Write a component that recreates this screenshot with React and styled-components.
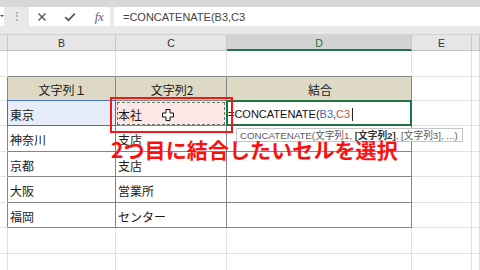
import React from "react";
import styled, { createGlobalStyle, css } from "styled-components";

const GlobalStyle = createGlobalStyle`
  html, body { margin: 0; padding: 0; background: #fff; }
  body {
    width: 480px;
    height: 270px;
    overflow: hidden;
    font-family: "Noto Sans CJK JP", "Noto Sans", sans-serif;
  }
`;

const COLS = "8px 108px 111px 185px 60px 1fr";
const GRID = "#e1e1e1";
const DARK = "#858585";
const GREEN = "#217346";

const Screen = styled.div`
  position: relative;
  width: 480px;
  height: 270px;
  overflow: hidden;
  background: #fff;
  display: flex;
  flex-direction: column;
`;

const TopStrip = styled.div`
  height: 7px;
  flex: none;
  background: #d8d8d8;
`;

const FormulaBar = styled.div`
  height: 27px;
  flex: none;
  box-sizing: border-box;
  padding-bottom: 8px;
  background: #e9e9e9;
  display: flex;
  align-items: stretch;
`;

const NameBox = styled.div`
  width: 4px;
  background: #fff;
  position: relative;
  &::after {
    content: "";
    position: absolute;
    left: 0;
    top: 8px;
    border-left: 2px solid transparent;
    border-right: 2px solid transparent;
    border-top: 2px solid #555;
  }
`;

const GripArea = styled.div`
  width: 25px;
  display: flex;
  align-items: center;
  justify-content: center;
`;

const Grip = styled.span`
  width: 0;
  height: 9px;
  border-left: 2px dotted #b9b9b9;
`;

const FxBox = styled.div`
  width: 81px;
  background: #fff;
  display: flex;
  align-items: center;
  padding-left: 8px;
  box-sizing: border-box;
`;

const IconSlot = styled.span`
  width: ${(p) => p.$w}px;
  display: flex;
  align-items: center;
  justify-content: center;
  color: #555;
`;

const Fx = styled.span`
  font-family: "Liberation Serif", "DejaVu Serif", serif;
  font-style: italic;
  font-size: 13px;
  color: #666;
  letter-spacing: -0.5px;
`;

const FormulaInput = styled.div`
  flex: 1;
  margin-left: 4px;
  background: #fff;
  display: flex;
  align-items: center;
  padding-left: 9px;
  font-family: "Liberation Sans", Arial, sans-serif;
  font-size: 11px;
  color: #444;
`;

const Row = styled.div`
  display: grid;
  grid-template-columns: ${COLS};
  height: ${(p) => p.$h}px;
  flex: none;
`;

const HeadCell = styled.div`
  box-sizing: border-box;
  border-right: 1px solid #c9c9c9;
  border-bottom: ${(p) => (p.$selected ? `2px solid ${GREEN}` : "1px solid #c3c3c3")};
  border-top: 1px solid #d2d2d2;
  background: ${(p) => (p.$selected ? "#d3d3d3" : "#e6e6e6")};
  color: ${(p) => (p.$selected ? GREEN : "#333")};
  font-family: "Liberation Sans", Arial, sans-serif;
  font-size: 10.5px;
  display: flex;
  align-items: center;
  justify-content: center;
  padding-top: 1px;
`;

const markStyles = {
  ref: css`
    background: #e6ecf8;
    &::after {
      content: "";
      position: absolute;
      inset: -1px;
      border: 1px solid #4a6fc0;
      pointer-events: none;
    }
  `,
  copy: css`
    background: #fce6e6;
    &::after {
      content: "";
      position: absolute;
      inset: 1px 1px 0 1px;
      border: 1px dashed #62806c;
      pointer-events: none;
    }
  `,
  active: css`
    z-index: 2;
    &::after {
      content: "";
      position: absolute;
      inset: -1px;
      border: 2px solid ${GREEN};
      pointer-events: none;
    }
  `,
};

const Cell = styled.div`
  position: relative;
  box-sizing: border-box;
  border-right: 1px solid ${(p) => (p.$darkRight ? DARK : GRID)};
  border-bottom: 1px solid ${(p) => (p.$darkBottom ? DARK : GRID)};
  background: ${(p) => p.$bg || "#fff"};
  display: flex;
  align-items: center;
  justify-content: ${(p) => (p.$center ? "center" : "flex-start")};
  padding: 2px 0 0 2px;
  font-size: 12px;
  color: #1a1a1a;
  white-space: nowrap;
  ${(p) => p.$mark && markStyles[p.$mark]}
`;

const FormulaText = styled.span`
  font-family: "Liberation Sans", Arial, sans-serif;
  font-size: 11px;
  color: #111;
  display: flex;
  align-items: center;
  margin-left: -1px;
`;

const Ref = styled.span`
  color: ${(p) => p.$color};
`;

const Caret = styled.span`
  display: inline-block;
  width: 1px;
  height: 13px;
  margin-left: 2px;
  background: #222;
`;

const RedFrame = styled.span`
  position: absolute;
  left: -6px;
  right: -7px;
  top: -4px;
  bottom: -8px;
  border: 2px solid #fa1414;
  z-index: 5;
  pointer-events: none;
`;

const CursorIcon = styled.svg`
  position: absolute;
  left: 46px;
  top: 8px;
  z-index: 4;
`;

const Tooltip = styled.div`
  position: absolute;
  left: 236px;
  top: 128px;
  height: 14px;
  padding: 0 4px 0 3px;
  box-sizing: border-box;
  background: #fff;
  border: 1px solid #c4c4c4;
  font-family: "Liberation Sans", "Noto Sans CJK JP", sans-serif;
  font-size: 9.7px;
  color: #5b5b5b;
  display: flex;
  align-items: center;
  white-space: nowrap;
  z-index: 6;
`;

const Strong = styled.b`
  color: #333;
  font-weight: 700;
`;

const Caption = styled.div`
  position: absolute;
  left: 111px;
  top: 139px;
  font-family: "Noto Sans CJK JP", sans-serif;
  font-weight: 700;
  font-size: 21px;
  line-height: 21px;
  color: #fb1010;
  white-space: nowrap;
  z-index: 7;
  letter-spacing: 0.1px;
`;

const XIcon = () => (
  <svg width="10" height="10" viewBox="0 0 10 10">
    <path d="M1.5 1.5 L8.5 8.5 M8.5 1.5 L1.5 8.5" stroke="#555" strokeWidth="1.4" fill="none" />
  </svg>
);

const CheckIcon = () => (
  <svg width="12" height="10" viewBox="0 0 12 10">
    <path d="M1.2 5.2 L4.4 8.3 L10.8 1.6" stroke="#555" strokeWidth="1.8" fill="none" />
  </svg>
);

const rows = [
  { h: 26 },
  { h: 24, head: true, b: "文字列１", c: "文字列2", d: "結合" },
  { h: 25, b: "東京", c: "本社", formula: true },
  { h: 26, b: "神奈川", c: "支店" },
  { h: 25, b: "京都", c: "支店" },
  { h: 26, b: "大阪", c: "営業所" },
  { h: 25, b: "福岡", c: "センター" },
  { h: 26 },
  { h: 26 },
];

const App = () => {
  return (
    <Screen>
      <GlobalStyle />
      <TopStrip />
      <FormulaBar>
        <NameBox />
        <GripArea>
          <Grip />
        </GripArea>
        <FxBox>
          <IconSlot $w={10}>
            <XIcon />
          </IconSlot>
          <IconSlot $w={17} />
          <IconSlot $w={12}>
            <CheckIcon />
          </IconSlot>
          <IconSlot $w={17} />
          <IconSlot $w={12}>
            <Fx>fx</Fx>
          </IconSlot>
        </FxBox>
        <FormulaInput>=CONCATENATE(B3,C3</FormulaInput>
      </FormulaBar>

      <Row $h={17}>
        <HeadCell />
        <HeadCell>B</HeadCell>
        <HeadCell>C</HeadCell>
        <HeadCell $selected>D</HeadCell>
        <HeadCell>E</HeadCell>
        <HeadCell />
      </Row>

      {rows.map((r, i) => {
        const inTable = i >= 1 && i <= 6;
        const topEdge = i === 0;
        const tan = r.head ? "#ddd9c4" : undefined;
        return (
          <Row key={i} $h={r.h}>
            <Cell $darkRight={inTable} />
            <Cell
              $darkRight={inTable}
              $darkBottom={inTable || topEdge}
              $bg={tan}
              $center={r.head}
              $mark={r.formula ? "ref" : undefined}
            >
              {r.b}
            </Cell>
            <Cell
              $darkRight={inTable}
              $darkBottom={inTable || topEdge}
              $bg={tan}
              $center={r.head}
              $mark={r.formula ? "copy" : undefined}
            >
              {r.c}
              {r.formula && (
                <>
                  <CursorIcon width="12" height="12" viewBox="0 0 12 12">
                    <path
                      d="M4 0.5 H8 V4 H11.5 V8 H8 V11.5 H4 V8 H0.5 V4 H4 Z"
                      fill="#fff"
                      stroke="#111"
                      strokeWidth="1"
                    />
                  </CursorIcon>
                  <RedFrame />
                </>
              )}
            </Cell>
            <Cell
              $darkRight={inTable}
              $darkBottom={inTable || topEdge}
              $bg={tan}
              $center={r.head}
              $mark={r.formula ? "active" : undefined}
            >
              {r.d}
              {r.formula && (
                <FormulaText>
                  =CONCATENATE(<Ref $color="#3d6bc7">B3</Ref>,<Ref $color="#c0504d">C3</Ref>
                  <Caret />
                </FormulaText>
              )}
            </Cell>
            <Cell />
            <Cell />
          </Row>
        );
      })}

      <Tooltip>
        CONCATENATE(文字列1,&nbsp;<Strong>[文字列2]</Strong>, [文字列3], ...)
      </Tooltip>
      <Caption>2つ目に結合したいセルを選択</Caption>
    </Screen>
  );
};

export default App;
